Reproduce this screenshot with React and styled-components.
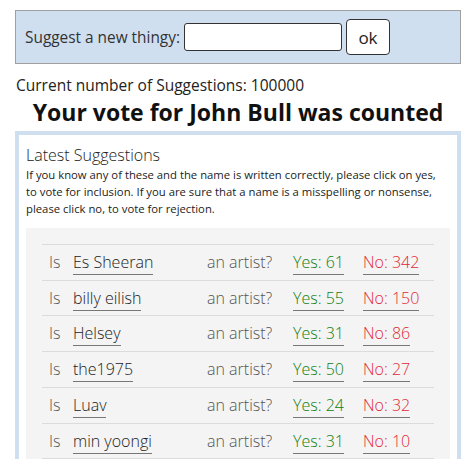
import React, { useState } from "react";
import styled, { createGlobalStyle } from "styled-components";

const suggestions = [
  { id: 1, name: "Es Sheeran", yes: 61, no: 342 },
  { id: 2, name: "billy eilish", yes: 55, no: 150 },
  { id: 3, name: "Helsey", yes: 31, no: 86 },
  { id: 4, name: "the1975", yes: 50, no: 27 },
  { id: 5, name: "Luav", yes: 24, no: 32 },
  { id: 6, name: "min yoongi", yes: 31, no: 10 },
];

const App = () => {
  const [value, setValue] = useState("");

  return (
    <Page>
      <GlobalStyle />
      <SuggestForm onSubmit={(e) => e.preventDefault()}>
        <Label htmlFor="thingy">Suggest a new thingy:</Label>
        <Input id="thingy" value={value} onChange={(e) => setValue(e.target.value)} />
        <OkButton type="submit">ok</OkButton>
      </SuggestForm>

      <Count>Current number of Suggestions: 100000</Count>
      <Heading>Your vote for John Bull was counted</Heading>

      <SuggestionBox>
        <BoxTitle>Latest Suggestions</BoxTitle>
        <Hint>
          If you know any of these and the name is written correctly, please click on yes,
          to vote for inclusion. If you are sure that a name is a misspelling or nonsense,
          please click no, to vote for rejection.
        </Hint>
        <Panel>
          <List>
            {suggestions.map((s) => (
              <Row key={s.id}>
                <Cell>Is</Cell>
                <Cell>
                  <VoteLink href="#">{s.name}</VoteLink>
                </Cell>
                <Cell>an artist?</Cell>
                <Cell>
                  <VoteLink href="#" $tone="yes">Yes: {s.yes}</VoteLink>
                </Cell>
                <Cell>
                  <VoteLink href="#" $tone="no">No: {s.no}</VoteLink>
                </Cell>
              </Row>
            ))}
          </List>
        </Panel>
      </SuggestionBox>
    </Page>
  );
};

// Styled Components

const GlobalStyle = createGlobalStyle`
  body {
    margin: 0;
    background: #ffffff;
    font-family: "Open Sans", "Liberation Sans", sans-serif;
    color: #222;
  }
`;

const Page = styled.div`
  padding: 10px 15px 0;
`;

const SuggestForm = styled.form`
  display: flex;
  align-items: center;
  gap: 4px;
  padding: 8px 9px;
  background-color: #d0dff0;
  border: 1px solid #a0a0a0;
`;

const Label = styled.label`
  font-size: 15.4px;
  color: #333;
`;

const Input = styled.input`
  width: 158px;
  height: 28px;
  box-sizing: border-box;
  border: 1px solid #333;
  border-radius: 3px;
  background: #fff;
  font-size: 14px;
  padding: 2px 4px;
`;

const OkButton = styled.button`
  width: 44px;
  height: 36px;
  box-sizing: border-box;
  background: #fff;
  border: 1px solid #333;
  border-radius: 4px;
  font-family: "Open Sans", "Liberation Sans", sans-serif;
  font-size: 17px;
  color: #222;
  padding: 0;
  cursor: pointer;
`;

const Count = styled.p`
  margin: 10px 0 0 1px;
  font-size: 15.5px;
  line-height: 22px;
  color: #222;
`;

const Heading = styled.h2`
  margin: 1px 0 0;
  text-align: center;
  font-size: 23px;
  line-height: 30px;
  font-weight: 700;
  color: #111;
`;

const SuggestionBox = styled.div`
  margin-top: 4px;
  border: 4px solid #d0dff0;
  border-bottom: none;
  padding: 9px 7px 0;
  background: #fff;
`;

const BoxTitle = styled.h3`
  margin: 0;
  font-size: 16px;
  font-weight: 300;
  line-height: 22px;
  color: #222;
`;

const Hint = styled.p`
  margin: 0;
  max-width: 420px;
  font-size: 11.3px;
  line-height: 17px;
  color: #222;
`;

const Panel = styled.div`
  margin-top: 11px;
  background: #f4f4f4;
  padding: 16px 16px 0;
`;

const List = styled.div`
  display: flex;
  flex-direction: column;
  border-bottom: 1px solid #dcdcdc;
`;

const Row = styled.div`
  display: grid;
  grid-template-columns: 24px 134px 86px 70px 1fr;
  border-top: 1px solid #dcdcdc;
`;

const Cell = styled.div`
  padding: 5px 0 5px 7px;
  font-size: 16px;
  font-weight: 300;
  line-height: 24.7px;
  color: #555;
  white-space: nowrap;
`;

const toneColor = {
  yes: "#0f800f",
  no: "#e02a35",
};

const VoteLink = styled.a`
  color: ${({ $tone }) => toneColor[$tone] || "#222"};
  text-decoration: none;
  border-bottom: 1px solid #777;
  padding-bottom: 1px;
  cursor: pointer;
`;

export default App;
